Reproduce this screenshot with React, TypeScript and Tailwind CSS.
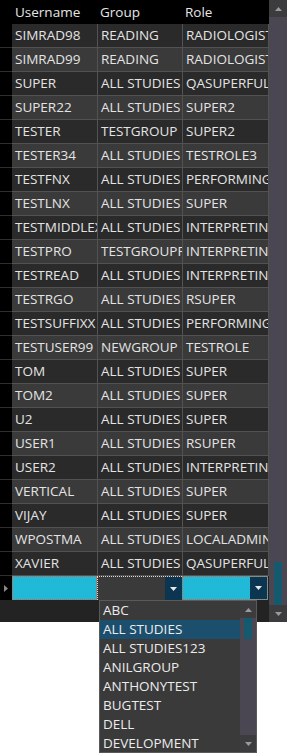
import React from "react";

const rows: [string, string, string][] = [
  ["SIMRAD98", "READING", "RADIOLOGIST"],
  ["SIMRAD99", "READING", "RADIOLOGIST"],
  ["SUPER", "ALL STUDIES", "QASUPERFULL"],
  ["SUPER22", "ALL STUDIES", "SUPER2"],
  ["TESTER", "TESTGROUP", "SUPER2"],
  ["TESTER34", "ALL STUDIES", "TESTROLE3"],
  ["TESTFNX", "ALL STUDIES", "PERFORMING"],
  ["TESTLNX", "ALL STUDIES", "SUPER"],
  ["TESTMIDDLEX", "ALL STUDIES", "INTERPRETING"],
  ["TESTPRO", "TESTGROUPFOR", "INTERPRETING"],
  ["TESTREAD", "ALL STUDIES", "INTERPRETING"],
  ["TESTRGO", "ALL STUDIES", "RSUPER"],
  ["TESTSUFFIXX", "ALL STUDIES", "PERFORMING"],
  ["TESTUSER99", "NEWGROUP", "TESTROLE"],
  ["TOM", "ALL STUDIES", "SUPER"],
  ["TOM2", "ALL STUDIES", "SUPER"],
  ["U2", "ALL STUDIES", "SUPER"],
  ["USER1", "ALL STUDIES", "RSUPER"],
  ["USER2", "ALL STUDIES", "INTERPRETING"],
  ["VERTICAL", "ALL STUDIES", "SUPER"],
  ["VIJAY", "ALL STUDIES", "SUPER"],
  ["WPOSTMA", "ALL STUDIES", "LOCALADMIN"],
  ["XAVIER", "ALL STUDIES", "QASUPERFULL"],
];

const items = [
  "ABC",
  "ALL STUDIES",
  "ALL STUDIES123",
  "ANILGROUP",
  "ANTHONYTEST",
  "BUGTEST",
  "DELL",
  "DEVELOPMENT",
];

const font = { fontFamily: '"Open Sans", "Noto Sans", sans-serif' };

function Down({ color = "#e8e8e8" }: { color?: string }) {
  return (
    <svg width="7" height="4" viewBox="0 0 7 4">
      <polygon points="0,0 7,0 3.5,4" fill={color} />
    </svg>
  );
}

function Up({ color = "#9a9a9a" }: { color?: string }) {
  return (
    <svg width="7" height="4" viewBox="0 0 7 4">
      <polygon points="0,4 7,4 3.5,0" fill={color} />
    </svg>
  );
}

export default function App() {
  return (
    <div className="relative w-[287px] bg-white" style={font}>
      <div className="flex h-[622px] w-[287px] bg-[#232323]">
        <div className="flex w-[269px] flex-col">
          {/* header */}
          <div className="flex h-[24px] bg-black text-[13.5px] text-[#e6e6e6]">
            <div className="w-[12px]" />
            <div className="flex w-[85px] items-center pl-[3px]">Username</div>
            <div className="flex w-[85px] items-center pl-[3px]">Group</div>
            <div className="flex w-[87px] items-center pl-[3px]">Role</div>
          </div>
          {rows.map((r, i) => {
            const bg = i % 2 === 0 ? "bg-[#2a2a2a]" : "bg-[#3a3a3a]";
            return (
              <div key={i} className="flex h-[24px] text-[13.5px] text-[#e4e4e4]">
                <div className="w-[12px] border-b border-[#2e2e2e] bg-black" />
                <div
                  className={`flex w-[85px] items-center overflow-hidden whitespace-nowrap border-b border-[#525252] pl-[3px] ${bg}`}
                >
                  {r[0]}
                </div>
                <div
                  className={`flex w-[85px] items-center overflow-hidden whitespace-nowrap border-b border-l border-[#525252] pl-[3px] ${bg}`}
                >
                  {r[1]}
                </div>
                <div
                  className={`flex w-[87px] items-center overflow-hidden whitespace-nowrap border-b border-l border-r border-[#525252] pl-[3px] ${bg}`}
                >
                  {r[2]}
                </div>
              </div>
            );
          })}
          {/* new row */}
          <div className="flex h-[24px]">
            <div className="flex w-[12px] items-center justify-center bg-black">
              <svg width="4" height="7" viewBox="0 0 4 7">
                <polygon points="0,0 4,3.5 0,7" fill="#8a8a8a" />
              </svg>
            </div>
            <div className="w-[85px] border border-dotted border-[#e0603a] bg-[#20b9d8]" />
            <div className="flex w-[85px] border-l border-t border-dotted border-[#dcdcdc] bg-[#3a3a3a]">
              <div className="flex-1" />
              <div className="flex w-[17px] items-center justify-center bg-[#0b3550]">
                <Down />
              </div>
            </div>
            <div className="flex w-[86px] border border-dotted border-[#e0603a] bg-[#20b9d8]">
              <div className="flex-1" />
              <div className="flex w-[17px] items-center justify-center bg-[#0b3550]">
                <Down />
              </div>
            </div>
          </div>
        </div>
        {/* vertical scrollbar */}
        <div className="flex w-[18px] flex-col bg-[#4a4652]">
          <div className="flex h-[17px] items-center justify-center bg-[#3c3b3e]">
            <Up />
          </div>
          <div className="flex flex-1 flex-col items-center justify-end">
            <div className="h-[43px] w-[8px] bg-[#15596f]" />
          </div>
          <div className="flex h-[17px] items-center justify-center bg-[#3c3b3e]">
            <Down color="#9a9a9a" />
          </div>
        </div>
      </div>
      <div className="h-[132px]" />
      {/* dropdown list */}
      <div className="absolute left-[99px] top-[600px] flex h-[153px] w-[158px] border border-[#5a5a5a] bg-[#3a3a3a] text-[13.5px] text-[#ececec]">
        <div className="flex-1">
          {items.map((t, i) => (
            <div
              key={t}
              className={`flex h-[19px] items-center whitespace-nowrap pl-[3px] ${
                i === 1 ? "bg-[#1c4f6d]" : ""
              }`}
            >
              {t}
            </div>
          ))}
        </div>
        <div className="flex w-[16px] flex-col bg-[#4a4652]">
          <div className="flex h-[17px] items-center justify-center bg-[#3c3b3e]">
            <Up />
          </div>
          <div className="flex flex-1 flex-col items-center">
            <div className="h-[21px] w-[8px] bg-[#15596f]" />
          </div>
          <div className="flex h-[17px] items-center justify-center bg-[#3c3b3e]">
            <Down color="#9a9a9a" />
          </div>
        </div>
      </div>
    </div>
  );
}
